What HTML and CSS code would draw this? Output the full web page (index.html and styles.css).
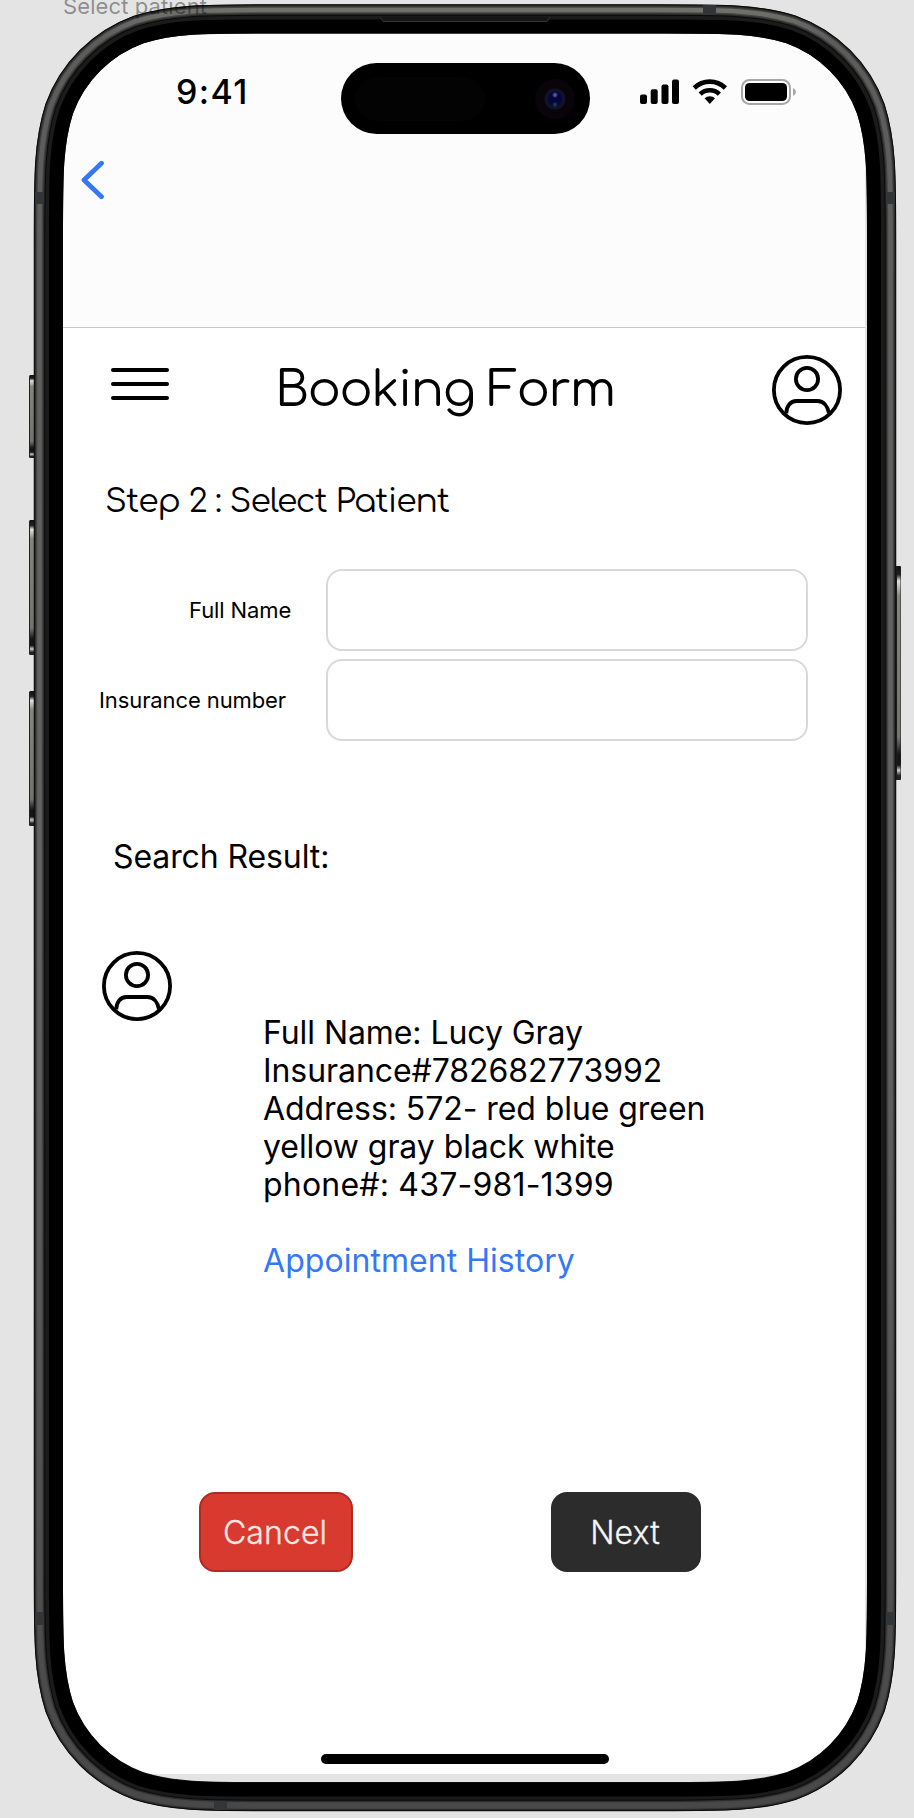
FILE: index.html
```html
<!DOCTYPE html>
<html lang="en">
<head>
<meta charset="utf-8">
<title>Select patient</title>
<link rel="stylesheet" href="styles.css">
</head>
<body>
<div class="canvas">
  <main class="screen">
    <header class="topbar">
      <div class="status">
        <span class="time">9:41</span>
        <div class="island"><span class="sensor"></span><span class="camera"></span></div>
        <svg class="status-icons" width="156" height="26" viewBox="0 0 156 26">
          <rect x="0" y="15.5" width="7" height="9.5" rx="2"/>
          <rect x="10.7" y="10.3" width="7" height="14.7" rx="2"/>
          <rect x="21.5" y="5.5" width="7" height="19.5" rx="2"/>
          <rect x="32" y="0.5" width="7" height="24.5" rx="2"/>
          <g fill="none" stroke="#000" stroke-width="4.6">
            <path d="M54.2 9A22.3 22.3 0 0 1 85.4 9"/>
            <path d="M60.2 15.1A13.9 13.9 0 0 1 79.4 15.1"/>
          </g>
          <path d="M64.6 19.3A7.6 7.6 0 0 1 75 19.3L69.8 25z"/>
          <rect x="102" y="1" width="48" height="24" rx="7.5" fill="none" stroke="#a6a6a6" stroke-width="2"/>
          <rect x="105" y="4" width="42" height="18" rx="4.5"/>
          <path d="M153 9Q156 10.500 156 13T153 17z" fill="#a6a6a6"/>
        </svg>
      </div>
      <svg class="back" width="24" height="40" viewBox="0 0 24 40"><path d="M20.500 3.200L3 20L20.500 36.700" fill="none" stroke="#3478f6" stroke-width="4.800" stroke-linecap="round" stroke-linejoin="round"/></svg>
    </header>

    <section class="heading">
      <svg class="menu" width="60" height="36" viewBox="0 0 60 36"><path d="M4 4H58M4 18H58M4 32H58" stroke="#000" stroke-width="4" stroke-linecap="round"/></svg>
      <h1 class="title">Booking Form</h1>
      <svg class="avatar" width="70" height="70" viewBox="0 0 70 70"><g fill="none" stroke="#000" stroke-width="3.800"><circle cx="35" cy="35" r="33.100"/><circle cx="35" cy="24" r="11.100"/><path d="M14.300 58.500C14.300 51 18.500 46 24.500 46H45.500C51.500 46 55.700 51 57 58.500"/></g></svg>
    </section>

    <h2 class="step">Step 2 : Select Patient</h2>

    <form class="fields">
      <label class="label label-name" for="name">Full Name</label>
      <input class="input" id="name" type="text">
      <label class="label label-insurance" for="insurance">Insurance number</label>
      <input class="input" id="insurance" type="text">
    </form>

    <h3 class="result-title">Search Result:</h3>

    <section class="result">
      <svg class="avatar" width="70" height="70" viewBox="0 0 70 70"><g fill="none" stroke="#000" stroke-width="3.800"><circle cx="35" cy="35" r="33.100"/><circle cx="35" cy="24" r="11.100"/><path d="M14.300 58.500C14.300 51 18.500 46 24.500 46H45.500C51.500 46 55.700 51 57 58.500"/></g></svg>
      <div class="details">
        <p>Full Name: Lucy Gray</p>
        <p>Insurance#782682773992</p>
        <p>Address: 572- red blue green</p>
        <p>yellow gray black white</p>
        <p class="phone">phone#: 437-981-1399</p>
        <a class="history">Appointment History</a>
      </div>
    </section>

    <div class="actions">
      <button class="button cancel">Cancel</button>
      <button class="button next">Next</button>
    </div>
    <div class="home"></div>
  </main>

  <svg class="frame" width="914" height="1818" viewBox="0 0 914 1818" fill="none">
    <defs>
      <linearGradient id="key" x1="0" y1="0" x2="0" y2="1">
        <stop offset="0" stop-color="#111"/><stop offset=".04" stop-color="#222"/><stop offset=".07" stop-color="#e0e0dc"/><stop offset=".14" stop-color="#85857f"/><stop offset=".8" stop-color="#73736e"/><stop offset=".88" stop-color="#161616"/><stop offset=".93" stop-color="#161616"/><stop offset=".955" stop-color="#ccc"/><stop offset=".98" stop-color="#222"/>
      </linearGradient>
      <linearGradient id="metal" gradientUnits="userSpaceOnUse" x1="0" y1="4" x2="0" y2="1811">
        <stop offset="0" stop-color="#74746f"/><stop offset=".02" stop-color="#5c5c5a"/><stop offset=".5" stop-color="#646464"/><stop offset="1" stop-color="#484848"/>
      </linearGradient>
      <path id="band" d="M271.100 10H658.900c66.700 0 100 0 135.900 11.350 39.200 14.250 70.100 45.150 84.350 84.350 11.350 35.900 11.350 69.200 11.350 135.900V1573.900c0 66.700 0 100-11.350 135.900-14.250 39.200-45.150 70.100-84.350 84.350-35.900 11.350-69.200 11.350-135.900 11.350H271.100c-66.700 0-100 0-135.900-11.350-39.200-14.250-70.100-45.150-84.350-84.350-11.350-35.900-11.350-69.200-11.350-135.900V241.600c0-66.700 0-100 11.350-135.900 14.250-39.200 45.150-70.100 84.350-84.350 35.900-11.350 69.200-11.350 135.900-11.350z"/>
    </defs>
    <g>
      <g fill="#222"><rect x="29" y="375" width="6" height="83" rx="1.500"/><rect x="29" y="520" width="6" height="135" rx="1.500"/><rect x="29" y="691" width="6" height="135" rx="1.500"/><rect x="895" y="566" width="6" height="214" rx="1.500"/></g>
      <g fill="url(#key)"><rect x="30" y="375" width="4" height="83"/><rect x="30" y="520" width="4" height="135"/><rect x="30" y="691" width="4" height="135"/><rect x="897" y="566" width="3.500" height="214"/></g>
    </g>
    <path stroke="#1b1b1b" stroke-width="29" d="M266.300 19H663.700c62.700 0 94.100 0 127.800 10.700 36.900 13.400 65.900 42.400 79.300 79.300 10.700 33.700 10.700 65.100 10.700 127.800V1578.700c0 62.700 0 94.100-10.700 127.800-13.400 36.900-42.400 65.900-79.300 79.300-33.700 10.700-65.100 10.700-127.800 10.700H266.300c-62.700 0-94.100 0-127.800-10.700-36.900-13.400-65.900-42.400-79.300-79.300-10.700-33.700-10.700-65.100-10.700-127.800V236.800c0-62.700 0-94.100 10.700-127.800 13.400-36.900 42.400-65.900 79.300-79.300 33.700-10.700 65.100-10.700 127.800-10.700z"/>
    <path stroke="#000" stroke-width="14" d="M262.400 26.500H667.600c59.500 0 89.200 0 121.100 10.100 35 12.700 62.500 40.200 75.200 75.200 10.100 31.900 10.100 61.600 10.100 121.100V1583.100c0 59.500 0 89.200-10.100 121.100-12.700 35-40.200 62.500-75.200 75.200-31.900 10.100-61.600 10.100-121.100 10.100H262.400c-59.500 0-89.200 0-121.100-10.100-35-12.700-62.500-40.200-75.200-75.200-10.100-31.900-10.100-61.600-10.100-121.100V232.900c0-59.500 0-89.200 10.100-121.100 12.700-35 40.200-62.500 75.200-75.200 31.900-10.100 61.600-10.100 121.100-10.100z"/>
    <use href="#band" stroke="#0a0a0a" stroke-width="11.500"/>
    <use href="#band" stroke="#2c2c2c" stroke-width="9.500"/>
    <use href="#band" stroke="#444" stroke-width="7"/>
    <use href="#band" stroke="url(#metal)" stroke-width="4.500"/>
    <g fill="#333638"><rect x="35" y="192" width="9" height="12"/><rect x="886" y="192" width="9" height="12"/><rect x="35" y="1612" width="9" height="13"/><rect x="886" y="1612" width="9" height="13"/><rect x="703" y="5" width="13" height="10"/><rect x="214" y="1801" width="13" height="9"/></g>
    <path d="M380 17L383 21.500H547L550 17" fill="#161616" stroke="#333"/>
  </svg>
  <div class="frame-name">Select patient</div>
</div>
</body>
</html>
```
FILE: styles.css
```css
* { box-sizing: border-box; }
body { margin: 0; background: #e4e4e4; color: #000; font-family: Inter, "Liberation Sans", sans-serif; }
h1, h2, h3, p { margin: 0; font-weight: 400; }
svg { display: block; flex: none; }

.canvas { position: relative; width: 914px; height: 1818px; padding: 34px 49px 0 63px; overflow: hidden; }
.frame { position: absolute; inset: 0; pointer-events: none; }
.frame-name { position: absolute; left: 63px; top: -8px; font-size: 22px; line-height: 28px; letter-spacing: .1px; color: rgba(0, 0, 0, .4); white-space: nowrap; }

.screen { width: 802px; height: 1740px; background: #fff; border-radius: 110px 110px 90px 90px; overflow: hidden; }

.topbar { height: 294px; padding-top: 28px; background: #fcfcfc; border-bottom: 1px solid #c8c8c8; }
.status { display: flex; align-items: center; height: 73px; padding-left: 113px; }
.time { width: 164.5px; font-size: 34px; font-weight: 500; line-height: 40px; letter-spacing: 1.4px; margin-top: -13px; }
.island { display: flex; align-items: center; justify-content: space-between; width: 249px; height: 71px; padding: 0 15px 0 14px; border-radius: 36px; background: #000; }
.sensor { width: 130px; height: 44px; border-radius: 22px; background: #030303; }
.camera { width: 40px; height: 40px; border-radius: 50%; background: radial-gradient(circle at 50% 40%, #5558a0 0 1px, transparent 3px), radial-gradient(circle at 50% 64%, #123c50 0 1px, transparent 3px), radial-gradient(circle, #05053a 0 6px, #11112a 8px 10px, #08040a 11px); }
.status-icons { margin: -13px 0 0 50.5px; }
.back { margin: 25px 0 0 18px; }

.heading { display: flex; align-items: flex-start; height: 97px; padding: 27px 23px 0 46px; }
.menu { margin-top: 11px; }
.title { flex: 1; padding: 3px 0 0 106px; font-family: Comfortaa, Quicksand, Lato, sans-serif; font-size: 49px; line-height: 64px; letter-spacing: -1.35px; white-space: nowrap; }
.step { margin: 55px 0 0 42px; font-family: Comfortaa, Quicksand, Lato, sans-serif; font-size: 33px; line-height: 44px; letter-spacing: -.97px; }

.fields { display: grid; grid-template-columns: 263px 482px; row-gap: 8px; margin-top: 45px; }
.label { align-self: center; font-size: 22px; line-height: 28px; letter-spacing: -.1px; white-space: nowrap; }
.label-name { padding-left: 126px; }
.label-insurance { padding-left: 36px; }
.input { height: 82px; width: 482px; border: 2px solid #d9d9d9; border-radius: 16px; background: #fff; }

.result-title { margin: 97px 0 0 50px; font-size: 32px; line-height: 38px; letter-spacing: -.1px; }
.result { display: flex; align-items: flex-start; gap: 91px; margin: 75px 0 0 39px; }
.details { padding-top: 63px; font-size: 32px; line-height: 38px; letter-spacing: -.07px; white-space: nowrap; }
.phone { letter-spacing: .2px; }
.history { display: block; margin-top: 38px; color: #3478f6; letter-spacing: .05px; }

.actions { display: flex; gap: 198px; margin: 212px 0 0 136px; }
.button { height: 80px; padding: 2px 2px 0 0; border: 2px solid #2c2c2c; border-radius: 16px; font: 300 32px/38px Inter, "Liberation Sans", sans-serif; letter-spacing: .1px; -webkit-text-stroke: .3px currentColor; }
.cancel { width: 154px; background: #d93a2f; border-color: #b02a22; color: #fee9e7; }
.next { width: 150px; background: #2c2c2c; color: #f5f5f5; }
.home { width: 288px; height: 10px; margin: 182px 0 0 258px; border-radius: 5px; background: #000; }
```
